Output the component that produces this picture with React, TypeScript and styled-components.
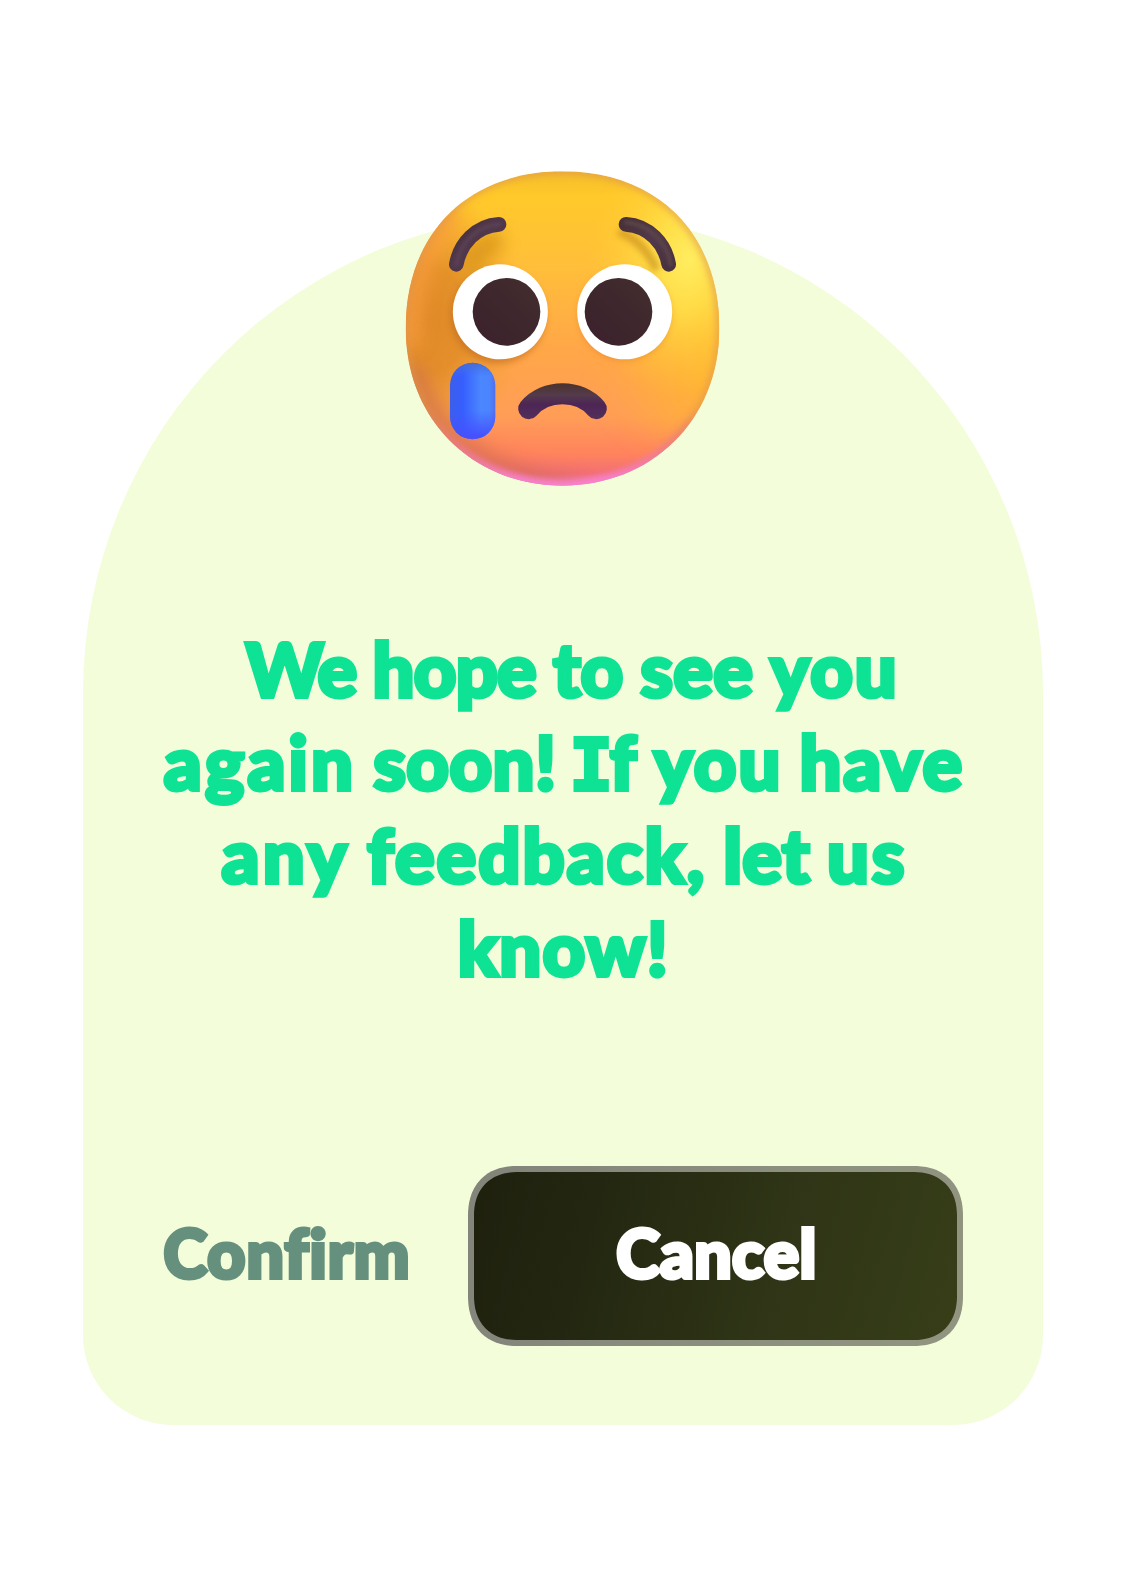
import React from 'react';
import styled, { createGlobalStyle } from 'styled-components';

const GlobalStyle = createGlobalStyle`
  body {
    margin: 0;
    background: #ffffff;
    font-family: Lato, "Open Sans", sans-serif;
    font-weight: 900;
  }
`;

const Page = styled.main`
  box-sizing: border-box;
  display: flex;
  justify-content: center;
  width: 1125px;
  height: 1575px;
  padding-top: 212.5px;
`;

const Card = styled.section`
  box-sizing: border-box;
  display: flex;
  flex-direction: column;
  align-items: center;
  width: 960px;
  height: 1212px;
  padding: 0 80px 79px;
  border-radius: 480px 480px 90px 90px;
  background: #f3fdda;
`;

const Face = styled.svg`
  display: block;
  flex: none;
  width: 345px;
  height: 340px;
  margin-top: -52.5px;
`;

const Message = styled.h1`
  margin: 121.5px 0 0;
  font-size: 74px;
  font-weight: 900;
  line-height: 93px;
  color: #0ee294;
  white-space: nowrap;
`;

const Line = styled.span<{ $indent?: number }>`
  display: flex;
  justify-content: center;
  gap: 17px;
  padding-left: ${({ $indent = 0 }) => $indent}px;
  -webkit-text-stroke: 4px currentColor;
`;

const Word = styled.span<{ $spacing: number }>`
  letter-spacing: ${({ $spacing }) => $spacing}px;
`;

const SlabLetter = styled.span`
  margin-left: -4px;
  font-family: "DejaVu Sans Mono", monospace;
  font-size: 72px;
  font-weight: 700;
  line-height: 1;
  letter-spacing: -3px;
`;

const Actions = styled.div`
  display: flex;
  align-items: center;
  justify-content: space-between;
  width: 100%;
  margin-top: auto;
`;

const Button = styled.button`
  margin: 0;
  padding: 0 0 7px;
  border: 0;
  background: none;
  font: 900 66px Lato, "Open Sans", sans-serif;
  -webkit-text-stroke: 4px currentColor;
  white-space: nowrap;
`;

const GhostButton = styled(Button)`
  margin-left: 1px;
  color: #66907e;
  letter-spacing: 1.1px;
`;

const SolidButton = styled(Button)`
  box-sizing: border-box;
  width: 495px;
  height: 180px;
  padding-left: 3px;
  border: 6px solid rgba(255, 255, 255, 0.45);
  border-radius: 46px;
  color: #ffffff;
  letter-spacing: 0.4px;
  background: linear-gradient(105deg, #1e200d 0%, #232711 25%, #2f3516 62%, #373e18 100%) border-box;

  @supports (corner-shape: superellipse(1.3)) {
    border-radius: 50px;
    corner-shape: superellipse(1.2);
  }
`;

const FACE =
  'M517 34C806 34 988 224 988 505C988 786 780 977 517 977C255 977 47 786 47 505C47 224 228 34 517 34Z';
const LEFT_BROW = 'M199 313C210 251 259 197 327 193';
const RIGHT_BROW = 'M708 193C776 197 825 251 836 313';
const MOUTH = 'M416 746C466 686 569 686 619 746';

function SadFace() {
  return (
    <Face viewBox="0 0 1035 1020" role="img" aria-label="Sad face with a tear">
      <defs>
        <linearGradient id="skin" x1="0" y1="0" x2="0" y2="1">
          <stop offset="0" stopColor="#f5bd2a" />
          <stop offset="0.08" stopColor="#ffc92a" />
          <stop offset="0.3" stopColor="#ffbf3a" />
          <stop offset="0.55" stopColor="#ffa847" />
          <stop offset="0.78" stopColor="#ff9d57" />
          <stop offset="0.9" stopColor="#ff835d" />
          <stop offset="0.96" stopColor="#f36f73" />
          <stop offset="1" stopColor="#f276ad" />
        </linearGradient>
        <radialGradient id="leftShade" gradientUnits="userSpaceOnUse" gradientTransform="translate(115 480) scale(290 400)" cx="0" cy="0" r="1">
          <stop offset="0" stopColor="#df8928" />
          <stop offset="0.4" stopColor="#e08b26" stopOpacity="0.85" />
          <stop offset="1" stopColor="#eda02c" stopOpacity="0" />
        </radialGradient>
        <radialGradient id="glow" gradientUnits="userSpaceOnUse" gradientTransform="translate(895 300) rotate(10) scale(310 420)" cx="0" cy="0" r="1">
          <stop offset="0" stopColor="#ffed60" />
          <stop offset="0.35" stopColor="#ffe24a" stopOpacity="0.85" />
          <stop offset="1" stopColor="#ffc92f" stopOpacity="0" />
        </radialGradient>
        <linearGradient id="rightShade" x1="640" y1="0" x2="988" y2="0" gradientUnits="userSpaceOnUse">
          <stop offset="0" stopColor="#ffb52f" stopOpacity="0" />
          <stop offset="1" stopColor="#ffb82f" stopOpacity="0.9" />
        </linearGradient>
        <linearGradient id="pinkEdge" x1="0" y1="740" x2="0" y2="960" gradientUnits="userSpaceOnUse">
          <stop offset="0" stopColor="#e35f76" stopOpacity="0" />
          <stop offset="1" stopColor="#fb7ed8" />
        </linearGradient>
        <linearGradient id="brow" x1="0" y1="0" x2="1" y2="1">
          <stop offset="0" stopColor="#48323a" />
          <stop offset="0.5" stopColor="#51384d" />
          <stop offset="1" stopColor="#493240" />
        </linearGradient>
        <linearGradient id="mouth" x1="0" y1="670" x2="0" y2="778" gradientUnits="userSpaceOnUse">
          <stop offset="0" stopColor="#4b332d" />
          <stop offset="0.32" stopColor="#533b4b" />
          <stop offset="0.6" stopColor="#4d2556" />
          <stop offset="1" stopColor="#54305a" />
        </linearGradient>
        <linearGradient id="pupil" x1="0" y1="1" x2="1" y2="0">
          <stop offset="0" stopColor="#3a202c" />
          <stop offset="1" stopColor="#432e2e" />
        </linearGradient>
        <linearGradient id="tear" x1="180" y1="0" x2="316" y2="0" gradientUnits="userSpaceOnUse">
          <stop offset="0" stopColor="#3d5eea" />
          <stop offset="0.28" stopColor="#365eff" />
          <stop offset="0.68" stopColor="#4b87ff" />
          <stop offset="0.88" stopColor="#4b84ff" />
          <stop offset="1" stopColor="#546eea" />
        </linearGradient>
        <linearGradient id="tearEnd" x1="0" y1="608" x2="0" y2="838" gradientUnits="userSpaceOnUse">
          <stop offset="0" stopColor="#4c6cc9" />
          <stop offset="0.18" stopColor="#3d70f5" stopOpacity="0" />
          <stop offset="0.62" stopColor="#4752ff" stopOpacity="0" />
          <stop offset="0.96" stopColor="#4451ff" />
          <stop offset="1" stopColor="#5c4dea" />
        </linearGradient>
        <filter id="blur5" x="-30%" y="-30%" width="160%" height="160%">
          <feGaussianBlur stdDeviation="5" />
        </filter>
        <filter id="blur10" x="-30%" y="-30%" width="160%" height="160%">
          <feGaussianBlur stdDeviation="10" />
        </filter>
        <filter id="blur26" x="-60%" y="-60%" width="220%" height="220%">
          <feGaussianBlur stdDeviation="26" />
        </filter>
        <filter id="blur50" x="-60%" y="-60%" width="220%" height="220%">
          <feGaussianBlur stdDeviation="44" />
        </filter>
        <clipPath id="faceClip">
          <path d={FACE} />
        </clipPath>
      </defs>

      <g clipPath="url(#faceClip)">
        <path d={FACE} fill="url(#skin)" />
        <path d="M640 360H1060V720L820 840L640 700Z" fill="url(#rightShade)" filter="url(#blur50)" />
        <path d={FACE} fill="url(#leftShade)" />
        <path d={FACE} fill="url(#glow)" />
        <path d="M58 560C55 400 90 270 190 160" fill="none" stroke="#fa9c40" strokeWidth="64" opacity="0.75" filter="url(#blur26)" />
        <path d="M230 330Q265 255 335 235" fill="none" stroke="#d69312" strokeWidth="60" opacity="0.85" filter="url(#blur26)" />
        <path d="M685 215Q760 240 800 330" fill="none" stroke="#cf9420" strokeWidth="24" opacity="0.8" filter="url(#blur10)" />
        <path d="M60 620C120 820 290 950 560 1000" fill="none" stroke="#cc6c50" strokeWidth="74" opacity="0.6" filter="url(#blur26)" />
        <path d={FACE} fill="none" stroke="#dd9550" strokeWidth="20" opacity="0.6" filter="url(#blur10)" />
        <path d={FACE} fill="none" stroke="url(#pinkEdge)" strokeWidth="30" filter="url(#blur10)" />
        <circle cx="325" cy="468" r="143" fill="#c06c20" opacity="0.6" filter="url(#blur10)" />
        <circle cx="704" cy="463" r="140" fill="#df7b2c" opacity="0.45" filter="url(#blur10)" />
      </g>

      <circle cx="331" cy="455.5" r="142.5" fill="#ffffff" />
      <circle cx="704" cy="455.5" r="142.5" fill="#ffffff" />
      <circle cx="349.5" cy="455.5" r="101.5" fill="url(#pupil)" />
      <circle cx="685.5" cy="455.5" r="101.5" fill="url(#pupil)" />

      <g fill="none" strokeLinecap="round">
        <path d={LEFT_BROW} stroke="url(#brow)" strokeWidth="44" />
        <path d={RIGHT_BROW} stroke="url(#brow)" strokeWidth="44" />
        <path d={LEFT_BROW} stroke="#5a4053" strokeWidth="12" filter="url(#blur5)" />
        <path d="M708 187C780 193 832 251 842 313" stroke="#5a4547" strokeWidth="12" filter="url(#blur5)" />
        <path d={MOUTH} stroke="url(#mouth)" strokeWidth="63" />
      </g>

      <rect x="180" y="608" width="136" height="230" rx="68" fill="url(#tear)" />
      <rect x="180" y="608" width="136" height="230" rx="68" fill="url(#tearEnd)" />
    </Face>
  );
}

export default function App() {
  return (
    <>
      <GlobalStyle />
      <Page>
        <Card>
          <SadFace />
          <Message>
            <Line $indent={19}>
              <Word $spacing={-1.6}>We</Word>
              <Word $spacing={-0.8}>hope</Word>
              <Word $spacing={0}>to</Word>
              <Word $spacing={0.3}>see</Word>
              <Word $spacing={1.8}>you</Word>
            </Line>
            <Line $indent={3}>
              <Word $spacing={3.2}>again</Word>
              <Word $spacing={0.4}>soon!</Word>
              <Word $spacing={0}>
                <SlabLetter>I</SlabLetter>f
              </Word>
              <Word $spacing={2}>you</Word>
              <Word $spacing={2}>have</Word>
            </Line>
            <Line $indent={4}>
              <Word $spacing={3.5}>any</Word>
              <Word $spacing={2}>feedback,</Word>
              <Word $spacing={0.2}>let</Word>
              <Word $spacing={3}>us</Word>
            </Line>
            <Line $indent={2}>
              <Word $spacing={1.2}>know!</Word>
            </Line>
          </Message>
          <Actions>
            <GhostButton type="button">Confirm</GhostButton>
            <SolidButton type="button">Cancel</SolidButton>
          </Actions>
        </Card>
      </Page>
    </>
  );
}
